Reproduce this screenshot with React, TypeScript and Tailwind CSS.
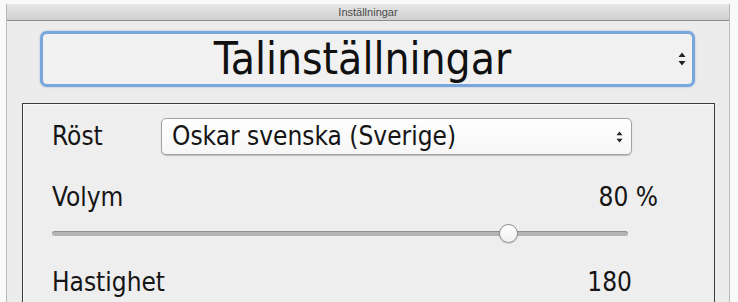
const font = { fontFamily: '"Liberation Sans Narrow", "DejaVu Sans Condensed", "Liberation Sans", sans-serif' };

function Arrows({ size = 'sm' }: { size?: 'sm' | 'lg' }) {
  const w = size === 'lg' ? 8 : 7;
  const h = size === 'lg' ? 14 : 12;
  return (
    <svg width={w} height={h} viewBox="0 0 8 14" className="shrink-0">
      <path d="M4 0.5 L7.5 5 L0.5 5 Z" fill="#222" />
      <path d="M4 13.5 L7.5 9 L0.5 9 Z" fill="#222" />
    </svg>
  );
}

function Slider({ value }: { value: number }) {
  // thumb left edge in px along the 576px track
  const left = (value / 100) * 559 - 0;
  return (
    <div className="relative h-[19px] w-[576px] flex items-center">
      <div className="h-[5px] w-full rounded-full bg-[#b4b4b4] border-t border-[#8e8e8e]" />
      <div
        className="absolute top-0 h-[19px] w-[19px] rounded-full bg-gradient-to-b from-white to-[#f0f0f0] border border-[#8f8f8f] shadow-[0_1px_1px_rgba(0,0,0,0.15)]"
        style={{ left: `${left}px` }}
      />
    </div>
  );
}

export default function App() {
  return (
    <div className="w-[738px] h-[302px] overflow-hidden bg-[#f9f9f9] pt-[4px]" style={font}>
      <div className="ml-[6px] w-[724px] h-[320px] bg-[#ececec] border-x border-[#b9b9b9]">
        <div className="h-[17px] bg-gradient-to-b from-[#e8e8e8] to-[#cfcfcf] border-b border-[#8c8c8c] flex items-center justify-center">
          <span className="text-[11px] leading-none text-[#4a4a4a]" style={{ fontFamily: '"Liberation Sans", sans-serif' }}>
            Inställningar
          </span>
        </div>

        <div className="pt-[10px] pl-[33px]">
          <div className="w-[655px] h-[56px] rounded-[7px] border-[3px] border-[#79a7dc] bg-[#f1f1f1] shadow-[0_0_2px_rgba(90,140,210,0.6)] flex items-center pr-[6px]">
            <div className="flex-1 text-center text-[44px] leading-none text-[#111] pl-[4px]">Talinställningar</div>
            <Arrows size="lg" />
          </div>
        </div>

        <div className="mt-[16px] ml-[15px] w-[693px] h-[220px] border border-[#3c3c3c] bg-[#eeeeee] shadow-[inset_1px_1px_0_#fafafa]">
          <div className="pl-[29px] pt-[14px]">
            <div className="flex items-center h-[37px]">
              <span className="w-[109px] text-[26px] text-[#151515]">Röst</span>
              <div className="w-[471px] h-[37px] rounded-[5px] border border-[#a2a2a2] bg-gradient-to-b from-white to-[#f6f6f6] shadow-[0_1px_1px_rgba(0,0,0,0.2)] flex items-center pl-[10px] pr-[8px]">
                <span className="flex-1 text-[26px] text-[#151515]">Oskar svenska (Sverige)</span>
                <Arrows />
              </div>
            </div>

            <div className="flex items-center justify-between w-[606px] h-[30px] mt-[27px]">
              <span className="text-[26px] text-[#151515]">Volym</span>
              <span className="text-[26px] text-[#151515]">80 %</span>
            </div>

            <div className="mt-[12px]">
              <Slider value={80} />
            </div>

            <div className="flex items-center justify-between w-[580px] h-[30px] mt-[24px]">
              <span className="text-[26px] text-[#151515]">Hastighet</span>
              <span className="text-[26px] text-[#151515]">180</span>
            </div>
          </div>
        </div>
      </div>
    </div>
  );
}
